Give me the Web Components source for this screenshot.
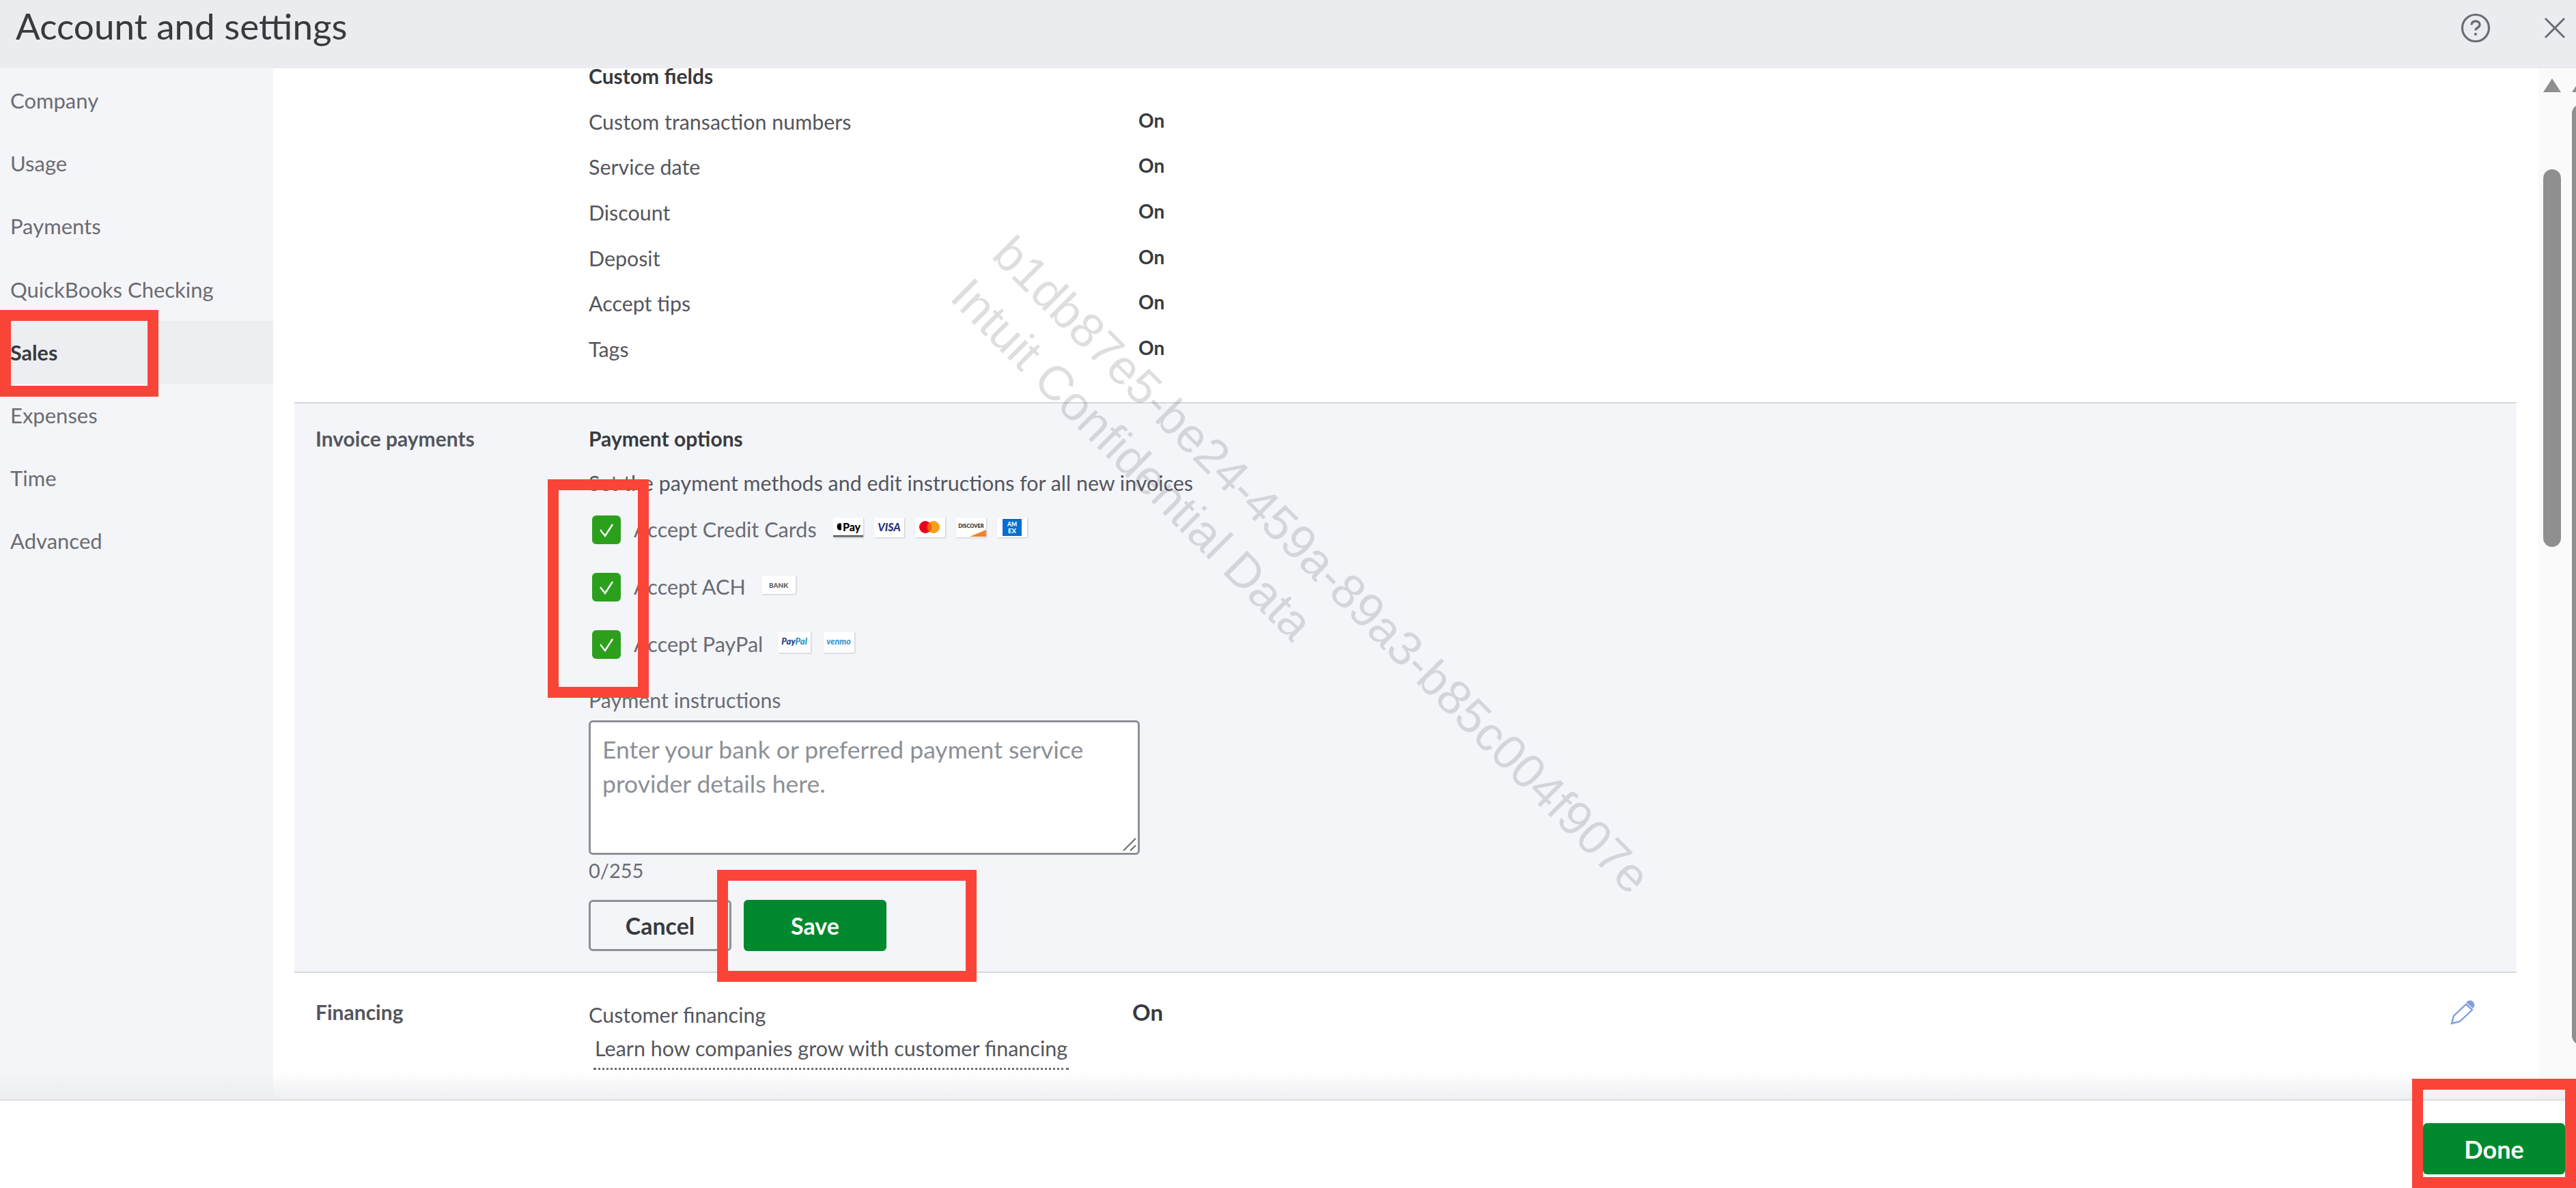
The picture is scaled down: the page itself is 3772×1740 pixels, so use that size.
<!doctype html>
<html>
<head>
<meta charset="utf-8">
<title>Account and settings</title>
<style>
  html, body { margin: 0; padding: 0; height: 100%; background: #fff; overflow: hidden; }
  body { font-family: Lato, "Open Sans", sans-serif; color: #393a3d; }
</style>
</head>
<body>
<qb-app>
  <qb-header slot="header" title="Account and settings"></qb-header>
  <qb-sidebar slot="sidebar">
    <qb-nav-item>Company</qb-nav-item>
    <qb-nav-item>Usage</qb-nav-item>
    <qb-nav-item>Payments</qb-nav-item>
    <qb-nav-item>QuickBooks Checking</qb-nav-item>
    <qb-nav-item active>Sales</qb-nav-item>
    <qb-nav-item>Expenses</qb-nav-item>
    <qb-nav-item>Time</qb-nav-item>
    <qb-nav-item>Advanced</qb-nav-item>
  </qb-sidebar>
  <qb-custom-fields slot="main"></qb-custom-fields>
  <qb-invoice-payments slot="main"></qb-invoice-payments>
  <qb-financing slot="main"></qb-financing>
  <qb-scrollbar slot="scroll"></qb-scrollbar>
  <qb-footer slot="footer"></qb-footer>
</qb-app>
<qb-watermark></qb-watermark>
<qb-mark x="0" y="454" w="232" h="127"></qb-mark>
<qb-mark x="802" y="702" w="148" h="320"></qb-mark>
<qb-mark x="1050" y="1274" w="380" h="164"></qb-mark>
<qb-mark x="3532" y="1580" w="240" h="160"></qb-mark>

<script>
const FONT = 'Lato, "Open Sans", sans-serif';

class QbApp extends HTMLElement {
  constructor() {
    super();
    this.attachShadow({ mode: 'open' });
  }
  connectedCallback() {
    this.shadowRoot.innerHTML = `
      <style>
        :host { display: grid; grid-template-rows: 100px 1510px 130px; width: 3772px; height: 1740px; }
        .middle { display: flex; min-height: 0; overflow: hidden; }
        .main { flex: 1; min-width: 0; overflow: hidden; padding: 0 32px 0 31px; background: #fff; }
      </style>
      <slot name="header"></slot>
      <div class="middle">
        <slot name="sidebar"></slot>
        <div class="main"><slot name="main"></slot></div>
        <slot name="scroll"></slot>
      </div>
      <slot name="footer"></slot>
    `;
  }
}
customElements.define('qb-app', QbApp);

class QbHeader extends HTMLElement {
  constructor() {
    super();
    this.attachShadow({ mode: 'open' });
  }
  connectedCallback() {
    this.shadowRoot.innerHTML = `
      <style>
        :host { display: flex; align-items: flex-start; background: #ebecf0; font-family: ${FONT}; }
        h1 { flex: 1; margin: 0; padding: 7px 0 0 23px; font-size: 53px; line-height: 62px; font-weight: 400; color: #393a3d; }
        .icons { display: flex; align-items: center; gap: 78px; padding: 19px 15px 0 0; }
        svg { display: block; }
      </style>
      <h1>${this.getAttribute('title')}</h1>
      <div class="icons">
        <svg width="44" height="44" viewBox="0 0 44 44" fill="none" stroke="#6b6c72">
          <circle cx="22" cy="22" r="19.5" stroke-width="3.2"/>
          <path d="M16 17.5c0-3.6 2.7-5.5 6-5.5s6 2 6 5c0 2.4-1.4 3.6-3.2 4.7-1.8 1-2.8 1.8-2.8 3.8" stroke-width="3.4"/>
          <circle cx="22" cy="31" r="2.1" fill="#6b6c72" stroke="none"/>
        </svg>
        <svg width="32" height="32" viewBox="0 0 32 32" fill="none" stroke="#6b6c72" stroke-width="3">
          <path d="M2 2l28 28M30 2L2 30"/>
        </svg>
      </div>
    `;
  }
}
customElements.define('qb-header', QbHeader);

class QbSidebar extends HTMLElement {
  constructor() {
    super();
    this.attachShadow({ mode: 'open' });
  }
  connectedCallback() {
    this.shadowRoot.innerHTML = `
      <style>
        :host { display: block; width: 400px; flex: none; background: #f4f5f8; padding-top: 1px; box-sizing: border-box; }
      </style>
      <slot></slot>
    `;
  }
}
customElements.define('qb-sidebar', QbSidebar);

class QbNavItem extends HTMLElement {
  constructor() {
    super();
    this.attachShadow({ mode: 'open' });
  }
  connectedCallback() {
    this.shadowRoot.innerHTML = `
      <style>
        :host { display: flex; align-items: center; height: 92.2px; padding-left: 15px; font: 400 31px/36px ${FONT}; color: #6b6c72; }
        :host([active]) { background: #eceef2; color: #393a3d; font-weight: 700; font-size: 30.5px; }
      </style>
      <slot></slot>
    `;
  }
}
customElements.define('qb-nav-item', QbNavItem);

class QbSettingRow extends HTMLElement {
  constructor() {
    super();
    this.attachShadow({ mode: 'open' });
  }
  connectedCallback() {
    this.shadowRoot.innerHTML = `
      <style>
        :host { display: grid; grid-template-columns: 805px auto; align-items: center; height: 66.6px; font: 400 30.4px/36px ${FONT}; color: #55565c; }
        b { font-weight: 700; color: #393a3d; font-size: 28px; position: relative; top: -2px; }
      </style>
      <span><slot></slot></span><b>${this.getAttribute('value')}</b>
    `;
  }
}
customElements.define('qb-setting-row', QbSettingRow);

class QbCustomFields extends HTMLElement {
  constructor() {
    super();
    this.attachShadow({ mode: 'open' });
  }
  connectedCallback() {
    const rows = ['Custom transaction numbers', 'Service date', 'Discount', 'Deposit', 'Accept tips', 'Tags'];
    this.shadowRoot.innerHTML = `
      <style>
        :host { display: block; height: 489px; box-sizing: border-box; padding-left: 431px; font-family: ${FONT}; }
        h3 { margin: 0 0 22.5px; font-size: 30px; line-height: 22px; font-weight: 700; color: #393a3d; }
      </style>
      <h3>Custom fields</h3>
      ${rows.map(r => `<qb-setting-row value="On">${r}</qb-setting-row>`).join('')}
    `;
  }
}
customElements.define('qb-custom-fields', QbCustomFields);

class QbPayLogo extends HTMLElement {
  constructor() {
    super();
    this.attachShadow({ mode: 'open' });
  }
  connectedCallback() {
    const kinds = {
      apple: `<rect y="26" width="44" height="2.5" fill="#555"/>
        <path d="M7 9c2-1 4-1 5 0v9c-2 1-4 1-6-2-1-3 0-6 1-7z" fill="#000"/>
        <text x="27" y="20" text-anchor="middle" font-size="16" font-weight="900" fill="#000">Pay</text>`,
      visa: `<text x="22" y="20" text-anchor="middle" font-size="16" font-weight="900" font-style="italic" fill="#27337a">VISA</text>`,
      mc: `<circle cx="15" cy="14" r="9" fill="#eb001b"/><circle cx="27" cy="14" r="9" fill="#f79e1b"/><path d="M21 7a9 9 0 0 1 0 14 9 9 0 0 1 0-14z" fill="#ff5f00"/>`,
      discover: `<text x="22" y="15" text-anchor="middle" font-size="7.5" font-weight="900" fill="#222">DISCOVER</text><path d="M20 28L44 18V28z" fill="#f58220"/>`,
      amex: `<rect x="8" y="2" width="28" height="25" fill="#016fd0"/><text x="22" y="13" text-anchor="middle" font-size="8.5" font-weight="900" fill="#fff">AM</text><text x="22" y="23" text-anchor="middle" font-size="9.5" font-weight="900" fill="#fff">EX</text>`,
      bank: `<text x="24" y="18" text-anchor="middle" font-size="10" font-weight="900" fill="#55565c">BANK</text>`,
      paypal: `<text x="24" y="19" text-anchor="middle" font-size="13" font-weight="900" font-style="italic" fill="#2790c3"><tspan fill="#253b80">Pay</tspan>Pal</text>`,
      venmo: `<text x="22" y="19" text-anchor="middle" font-size="12.5" font-weight="900" font-style="italic" fill="#3d95ce">venmo</text>`
    };
    const kind = this.getAttribute('kind');
    const w = this.getAttribute('w') || 44;
    const h = this.getAttribute('h') || 29;
    this.shadowRoot.innerHTML = `
      <style>
        :host { display: block; width: ${w}px; height: ${h}px; background: #fff; box-shadow: 1px 1px 2px rgba(0,0,0,.18); flex: none; }
        svg { display: block; font-family: ${FONT}; }
      </style>
      <svg width="${w}" height="${h}" viewBox="0 0 ${w} ${h}">${kinds[kind]}</svg>
    `;
  }
}
customElements.define('qb-pay-logo', QbPayLogo);

class QbCheck extends HTMLElement {
  constructor() {
    super();
    this.attachShadow({ mode: 'open' });
  }
  connectedCallback() {
    this.shadowRoot.innerHTML = `
      <style>
        :host { display: flex; align-items: center; height: 42px; font: 400 30.6px/36px ${FONT}; color: #6b6c72; }
        .box { width: 42px; height: 42px; flex: none; border-radius: 6px; background: #2ca01c; margin: 0 19px 0 5px; }
        svg { display: block; }
        .logos { display: flex; align-items: center; gap: var(--logo-gap, 16px); margin-top: -8px; margin-left: var(--logo-left, 24px); }
      </style>
      <div class="box">
        <svg width="42" height="42" viewBox="0 0 42 42" fill="none" stroke="#fff" stroke-width="2.4"><path d="M12 21l7 9 11-17"/></svg>
      </div>
      <span><slot></slot></span>
      <div class="logos"><slot name="logos"></slot></div>
    `;
  }
}
customElements.define('qb-check', QbCheck);

class QbButton extends HTMLElement {
  constructor() {
    super();
    this.attachShadow({ mode: 'open' });
  }
  connectedCallback() {
    this.shadowRoot.innerHTML = `
      <style>
        :host { display: inline-flex; align-items: center; justify-content: center; box-sizing: border-box; width: var(--btn-w, 209px); height: var(--btn-h, 75px); border-radius: 6px; font: 700 var(--btn-size, 34px)/36px ${FONT}; background: #00892e; color: #fff; }
        :host([secondary]) { background: transparent; border: 3px solid #8d9096; color: #393a3d; }
      </style>
      <slot></slot>
    `;
  }
}
customElements.define('qb-button', QbButton);

class QbInvoicePayments extends HTMLElement {
  constructor() {
    super();
    this.attachShadow({ mode: 'open' });
  }
  connectedCallback() {
    this.shadowRoot.innerHTML = `
      <style>
        :host { display: grid; grid-template-columns: 431px 1fr; box-sizing: border-box; height: 836px; background: #f3f5f9; border-top: 2px solid #d4d7dc; border-bottom: 2px solid #d4d7dc; font: 400 30.4px/36px ${FONT}; color: #55565c; }
        .label { padding: 33px 0 0 31px; font-size: 30px; font-weight: 700; color: #55565c; }
        .body { padding-top: 33px; }
        h3 { margin: 0 0 29px; font: inherit; font-size: 30px; font-weight: 700; color: #393a3d; }
        p { margin: 0 0 30px; }
        .checks { display: flex; flex-direction: column; gap: 42px; margin-bottom: 42px; }
        .caption { color: #6b6c72; margin-bottom: 12px; }
        .area { box-sizing: border-box; width: 807px; height: 197px; background: #fff; border: 3px solid #8d9096; border-radius: 6px; padding: 15px 17px; font-size: 35.5px; line-height: 50px; color: #8d9096; position: relative; }
        .grip { position: absolute; right: 2px; bottom: 2px; display: block; }
        .count { margin-top: 5px; color: #6b6c72; font-size: 29px; }
        .actions { display: flex; gap: 18px; margin-top: 25px; }
      </style>
      <div class="label">Invoice payments</div>
      <div class="body">
        <h3>Payment options</h3>
        <p>Set the payment methods and edit instructions for all new invoices</p>
        <div class="checks">
          <qb-check>Accept Credit Cards
            <qb-pay-logo slot="logos" kind="apple"></qb-pay-logo>
            <qb-pay-logo slot="logos" kind="visa"></qb-pay-logo>
            <qb-pay-logo slot="logos" kind="mc"></qb-pay-logo>
            <qb-pay-logo slot="logos" kind="discover"></qb-pay-logo>
            <qb-pay-logo slot="logos" kind="amex"></qb-pay-logo>
          </qb-check>
          <qb-check>Accept ACH
            <qb-pay-logo slot="logos" kind="bank" w="49" h="27"></qb-pay-logo>
          </qb-check>
          <qb-check style="--logo-left:22px;--logo-gap:19px">Accept PayPal
            <qb-pay-logo slot="logos" kind="paypal" w="48" h="31"></qb-pay-logo>
            <qb-pay-logo slot="logos" kind="venmo" w="45" h="31"></qb-pay-logo>
          </qb-check>
        </div>
        <div class="caption">Payment instructions</div>
        <div class="area">Enter your bank or preferred payment service provider details here.
          <svg class="grip" width="22" height="22" viewBox="0 0 22 22" fill="none" stroke="#6b6c72" stroke-width="2"><path d="M3 21L21 3M13 21l8-8"/></svg>
        </div>
        <div class="count">0/255</div>
        <div class="actions">
          <qb-button secondary>Cancel</qb-button>
          <qb-button>Save</qb-button>
        </div>
      </div>
    `;
  }
}
customElements.define('qb-invoice-payments', QbInvoicePayments);

class QbFinancing extends HTMLElement {
  constructor() {
    super();
    this.attachShadow({ mode: 'open' });
  }
  connectedCallback() {
    this.shadowRoot.innerHTML = `
      <style>
        :host { display: grid; grid-template-columns: 431px 796px 1fr auto; align-items: start; padding-top: 43px; font: 400 30.5px/36px ${FONT}; color: #55565c; }
        .label { padding-left: 31px; margin-top: -4px; font-weight: 700; font-size: 30px; }
        a { display: inline-block; margin: 13px 0 0 7px; padding: 0 2px 11px; color: #55565c; text-decoration: none; border-bottom: 3px dotted #6b6c72; }
        .value { font-size: 33px; font-weight: 700; color: #393a3d; margin-top: -4px; }
        svg { display: block; margin: -3px 59px 0 0; }
      </style>
      <div class="label">Financing</div>
      <div>
        <div>Customer financing</div>
        <a>Learn how companies grow with customer financing</a>
      </div>
      <div class="value">On</div>
      <svg width="38" height="36" viewBox="0 0 38 36" fill="none" stroke="#7f9fe0" stroke-width="2.4">
        <path d="M2 34l3-11L23 6l9 8-18 17z"/>
        <path d="M23 3l3-2c2-1 5-1 7 1s3 5 2 7l-2 3z" fill="#7f9fe0" stroke="none"/>
      </svg>
    `;
  }
}
customElements.define('qb-financing', QbFinancing);

class QbScrollbar extends HTMLElement {
  constructor() {
    super();
    this.attachShadow({ mode: 'open' });
  }
  connectedCallback() {
    this.shadowRoot.innerHTML = `
      <style>
        :host { display: flex; gap: 16px; width: 55px; flex: none; box-sizing: border-box; padding: 15px 0 0 7px; background: #fafafa; overflow: hidden; }
        .col { width: 26px; flex: none; }
        .arrow { width: 0; height: 0; border-left: 13px solid transparent; border-right: 13px solid transparent; border-bottom: 20px solid #8f8f8f; }
        .thumb { background: #8f8f8f; border-radius: 13px; }
        .one { height: 553px; margin-top: 113px; }
        .two { height: 1377px; margin-top: 18px; }
      </style>
      <div class="col"><div class="arrow"></div><div class="thumb one"></div></div>
      <div class="col"><div class="arrow"></div><div class="thumb two"></div></div>
    `;
  }
}
customElements.define('qb-scrollbar', QbScrollbar);

class QbFooter extends HTMLElement {
  constructor() {
    super();
    this.attachShadow({ mode: 'open' });
  }
  connectedCallback() {
    this.shadowRoot.innerHTML = `
      <style>
        :host { display: flex; justify-content: flex-end; align-items: flex-start; position: relative; box-sizing: border-box; background: #fff; border-top: 2px solid #dcdde1; padding: 33px 16px 0 0; font-family: ${FONT}; }
        .fade { position: absolute; left: 0; right: 0; top: -42px; height: 40px; background: linear-gradient(rgba(235,236,238,0), rgba(235,236,238,.85)); }
        qb-button { --btn-w: 208px; --btn-h: 75px; --btn-size: 36px; }
      </style>
      <div class="fade"></div>
      <qb-button>Done</qb-button>
    `;
  }
}
customElements.define('qb-footer', QbFooter);

class QbWatermark extends HTMLElement {
  constructor() {
    super();
    this.attachShadow({ mode: 'open' });
  }
  connectedCallback() {
    this.shadowRoot.innerHTML = `
      <style>
        :host { display: block; position: absolute; left: 1400px; top: 340px; font: 400 70.5px/87px "Liberation Sans", sans-serif; color: rgba(60,60,65,.17); transform-origin: 0 0; transform: translate(98px, -12px) rotate(45deg); white-space: nowrap; pointer-events: none; }
        div { display: block; }
      </style>
      <div>b1db87e5-be24-459a-89a3-b85c004f907e</div>
      <div>Intuit Confidential Data</div>
    `;
  }
}
customElements.define('qb-watermark', QbWatermark);

class QbMark extends HTMLElement {
  constructor() {
    super();
    this.attachShadow({ mode: 'open' });
  }
  connectedCallback() {
    const a = n => this.getAttribute(n);
    this.shadowRoot.innerHTML = `
      <style>
        :host { display: block; position: absolute; left: ${a('x')}px; top: ${a('y')}px; width: ${a('w')}px; height: ${a('h')}px; box-sizing: border-box; border: 16px solid #fb4438; }
      </style>
    `;
  }
}
customElements.define('qb-mark', QbMark);
</script>
</body>
</html>
